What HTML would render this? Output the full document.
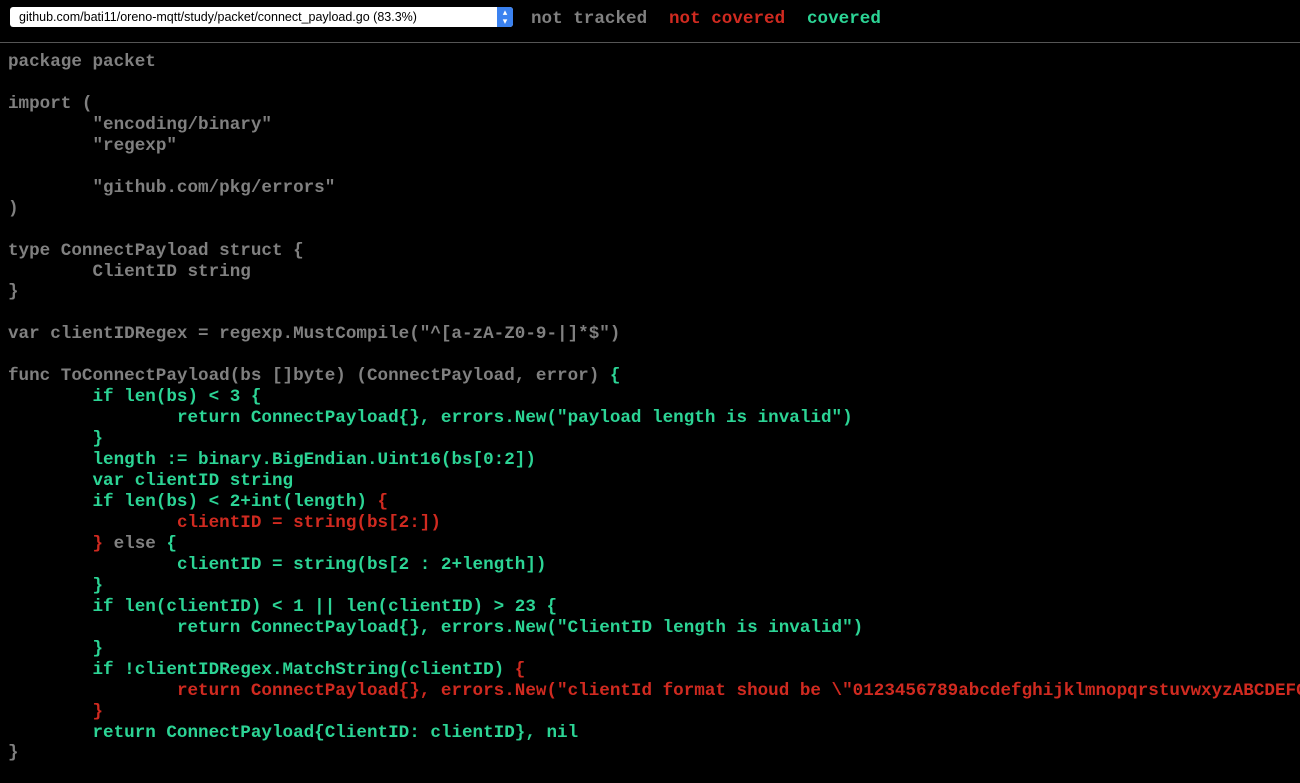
<!DOCTYPE html>
<html><head><style>
html,body{margin:0;padding:0;background:#000;width:1300px;height:783px;overflow:hidden}
body{font-family:"Liberation Mono",monospace;font-weight:bold;font-size:17.6px;color:#808080}
#top{position:absolute;left:0;top:0;width:1300px;height:42px;border-bottom:1px solid #555}
#sel{position:absolute;left:10px;top:7px;width:503px;height:20px;background:#fff;border-radius:3px;font-family:"Liberation Sans",sans-serif;font-weight:normal;font-size:12.5px;color:#000;line-height:20px;box-sizing:border-box;padding-left:9px}
#sel .arr{position:absolute;right:0;top:0;width:16px;height:20px;background:#3b82f0;border-radius:0 3px 3px 0;color:#fff;font-size:9px;line-height:9px;text-align:center;padding-top:1px;box-sizing:border-box}
.lg{position:absolute;top:9px;line-height:21px}
#code{position:absolute;left:0;top:52px;width:1300px;height:731px;overflow:hidden}
pre{margin:0 0 0 8px;font:inherit;line-height:20.95px;white-space:pre;tab-size:8}
.c{color:#2cd495}.n{color:#d02a20}
</style></head><body>
<div id="top">
<div id="sel">github.com/bati11/oreno-mqtt/study/packet/connect_payload.go (83.3%)<div class="arr">▴<br>▾</div></div>
<span class="lg" style="left:531px">not tracked</span>
<span class="lg n" style="left:669px">not covered</span>
<span class="lg c" style="left:807px">covered</span>
</div>
<div id="code"><pre>package packet

import (
	"encoding/binary"
	"regexp"

	"github.com/pkg/errors"
)

type ConnectPayload struct {
	ClientID string
}

var clientIDRegex = regexp.MustCompile("^[a-zA-Z0-9-|]*$")

func ToConnectPayload(bs []byte) (ConnectPayload, error) <span class="c">{
	if len(bs) &lt; 3 {
		return ConnectPayload{}, errors.New("payload length is invalid")
	}
	length := binary.BigEndian.Uint16(bs[0:2])
	var clientID string
	if len(bs) &lt; 2+int(length)</span> <span class="n">{
		clientID = string(bs[2:])
	}</span> else <span class="c">{
		clientID = string(bs[2 : 2+length])
	}
	if len(clientID) &lt; 1 || len(clientID) &gt; 23 {
		return ConnectPayload{}, errors.New("ClientID length is invalid")
	}
	if !clientIDRegex.MatchString(clientID)</span> <span class="n">{
		return ConnectPayload{}, errors.New("clientId format shoud be \"0123456789abcdefghijklmnopqrstuvwxyzABCDEFGHIJKLMNOPQRSTUVWXYZ\"")
	}</span>
	<span class="c">return ConnectPayload{ClientID: clientID}, nil</span>
}</pre></div>
</body></html>
